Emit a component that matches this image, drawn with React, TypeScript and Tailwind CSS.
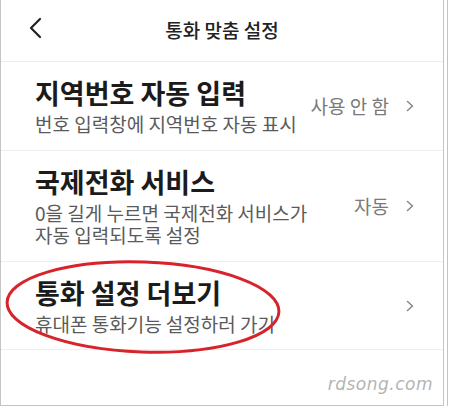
import React from 'react';

const font = { fontFamily: '"Noto Sans CJK KR", "Noto Sans", sans-serif' };

const Chevron = () => (
  <svg width="8" height="12" viewBox="0 0 8 12" className="shrink-0">
    <path d="M1.5 1.5 L6.5 6 L1.5 10.5" fill="none" stroke="#8a8a8a" strokeWidth="1.6" strokeLinecap="round" strokeLinejoin="round" />
  </svg>
);

type RowProps = {
  title: string;
  desc: string;
  value?: string;
  height: string;
};

const SettingRow = ({ title, desc, value, height }: RowProps) => (
  <div className={`flex items-center justify-between border-b border-[#efefef] pl-[34px] pr-[29px] ${height}`}>
    <div className="flex flex-col gap-[4px]">
      <p className="text-[27px] leading-[32px] font-bold text-[#1b1b1b]">{title}</p>
      <p className="max-w-[280px] break-keep text-[19px] leading-[22px] text-[#5a5a5a]">{desc}</p>
    </div>
    <div className="flex items-center gap-[17px]">
      {value && <span className="text-[19px] text-[#7a7a7a]">{value}</span>}
      <Chevron />
    </div>
  </div>
);

export default function App() {
  return (
    <div className="relative flex w-[449px] h-[408px] bg-white" style={font}>
      <div className="flex flex-col w-[444px] h-[406px] border-l border-r border-b border-[#c4c4c4]">
        <header className="relative flex items-center justify-center h-[62px] border-b border-[#ededed]">
          <svg width="14" height="22" viewBox="0 0 14 22" className="absolute left-[27px] top-[17px]">
            <path d="M12 2 L3 11 L12 20" fill="none" stroke="#222" strokeWidth="2.2" strokeLinecap="round" strokeLinejoin="round" />
          </svg>
          <h1 className="text-[19px] font-medium text-[#222]">통화 맞춤 설정</h1>
        </header>

        <SettingRow
          title="지역번호 자동 입력"
          desc="번호 입력창에 지역번호 자동 표시"
          value="사용 안 함"
          height="h-[89px]"
        />
        <SettingRow
          title="국제전화 서비스"
          desc="0을 길게 누르면 국제전화 서비스가 자동 입력되도록 설정"
          value="자동"
          height="h-[111px]"
        />
        <SettingRow
          title="통화 설정 더보기"
          desc="휴대폰 통화기능 설정하러 가기"
          height="h-[88px]"
        />

        <div className="flex justify-end pr-[10px] pt-[22px]">
          <span
            className="text-[17px] italic text-[#b4b4b4] tracking-[0.5px]"
            style={{ fontFamily: '"DejaVu Sans", sans-serif' }}
          >
            rdsong.com
          </span>
        </div>
      </div>
      <div className="ml-[3px] w-px h-[406px] bg-[#c4c4c4]" />

      <svg width="300" height="110" viewBox="0 0 300 110" className="absolute left-0 top-[253px] pointer-events-none">
        <ellipse cx="143" cy="54" rx="136" ry="45" fill="none" stroke="#d8232a" strokeWidth="3" transform="rotate(2 143 54)" />
      </svg>
    </div>
  );
}
